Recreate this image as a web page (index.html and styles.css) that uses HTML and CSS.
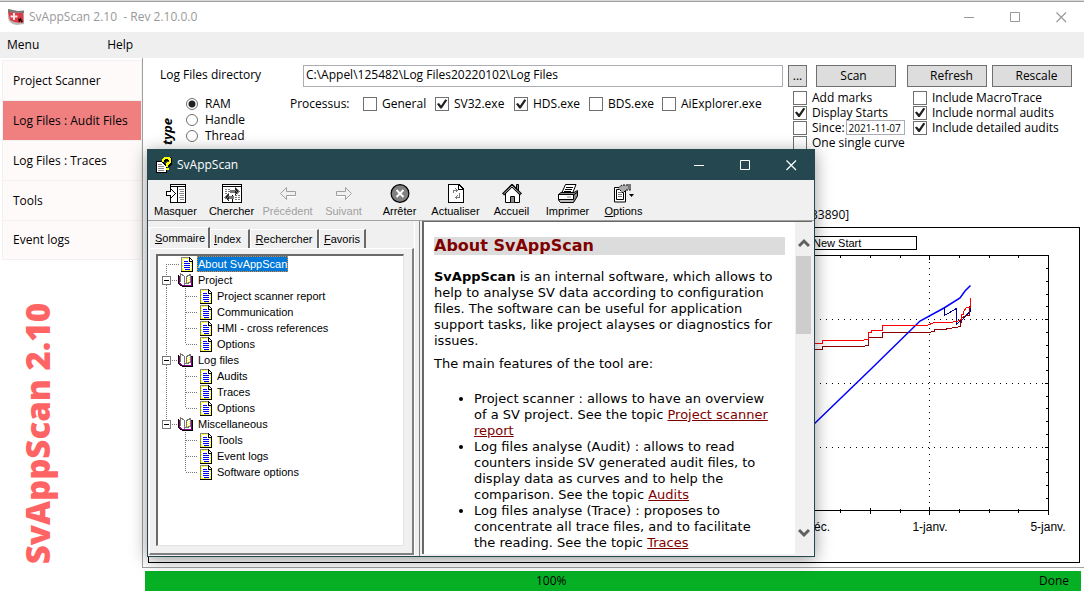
FILE: index.html
```html
<!DOCTYPE html>
<html lang="en">
<head>
<meta charset="utf-8">
<title>SvAppScan 2.10</title>
<link rel="stylesheet" href="styles.css">
</head>
<body>
<svg class="sprite" aria-hidden="true">
  <symbol id="doc" viewBox="0 0 13 16">
    <path d="M0 1H9L12 4V16H0Z" fill="#fff"/>
    <path d="M2 2.500h6M1 14.500h10" stroke="#ff0" stroke-dasharray="2 1" fill="none"/>
    <path d="M1.500 3v11M10.500 6v9" stroke="#ff0" stroke-dasharray="2 1" fill="none"/>
    <path d="M.5 16V1.500H8" stroke="#848484" fill="none"/>
    <path d="M8.500 1V5.500H11.500M9.500 2v1M10.500 3v1M11.500 4V15.500H0" stroke="#000" fill="none"/>
    <path d="M3 5.500h4M3 7.500h6M3 9.500h6M3 11.500h6M4 13.500h5" stroke="#00f" fill="none"/>
  </symbol>
  <symbol id="book" viewBox="0 0 16 16">
    <path d="M1 3v9l4 2h9V4h-2V1L8 4 4 1v2Z" fill="#fff"/>
    <path d="M9.500 4v7M11.500 3v7" stroke="#ff0" stroke-dasharray="1 1" fill="none"/>
    <path d="M.5 2.500V11.500L4.500 14.500H14.500V4.500H13" stroke="#000" fill="none"/>
    <path d="M1.500 3.500V11.500L5 13.500H13.500V5" stroke="#800080" fill="none"/>
    <path d="M2.500 10V1.500L6.500 4.500V12.500M7.500 12L8.500 11.500L12.500 10.500V2.500L8.500 4.500V11" stroke="#777" fill="none"/>
  </symbol>
  <symbol id="g-first" viewBox="0 0 23 16"><path d="M8 8.500H21M8.500 10V16" class="dots"/></symbol>
  <symbol id="g-open" viewBox="0 0 20 16"><path d="M8.500 0V4M8.500 13V16M14 8.500H19" class="dots"/><path d="M4.500 4.500h8v8h-8Z" fill="#fff" stroke="#777"/><path d="M6 8.500h5" stroke="#000"/></symbol>
  <symbol id="g-open-last" viewBox="0 0 20 16"><path d="M8.500 0V4M14 8.500H19" class="dots"/><path d="M4.500 4.500h8v8h-8Z" fill="#fff" stroke="#777"/><path d="M6 8.500h5" stroke="#000"/></symbol>
  <symbol id="g-mid" viewBox="0 0 42 16"><path d="M8.500 0V16M27.500 0V16M28 8.500H39" class="dots"/></symbol>
  <symbol id="g-last" viewBox="0 0 42 16"><path d="M8.500 0V16M27.500 0V8M28 8.500H39" class="dots"/></symbol>
  <symbol id="g-mid-end" viewBox="0 0 42 16"><path d="M27.500 0V16M28 8.500H39" class="dots"/></symbol>
  <symbol id="g-last-end" viewBox="0 0 42 16"><path d="M27.500 0V8M28 8.500H39" class="dots"/></symbol>
  <symbol id="w-min" viewBox="0 0 11 11"><path d="M0 5.500h10" stroke="currentColor"/></symbol>
  <symbol id="w-max" viewBox="0 0 11 11"><path d="M.5 .5h9v9h-9Z" fill="none" stroke="currentColor"/></symbol>
  <symbol id="w-close" viewBox="0 0 11 11"><path d="M.5 .5l9.500 9.500M10 .5l-9.500 9.500" stroke="currentColor" stroke-width="1.200"/></symbol>
</svg>

<div class="app">
  <header class="titlebar">
    <svg class="app-logo" viewBox="0 0 17 16" width="17" height="16">
      <path d="M0 0L10 2L16 1V15L9 16Q1 15 0 9Z" fill="#bdb6b6"/>
      <path d="M0 3L15 4L15.500 13Q8 15 2 11Z" fill="#dc3a45"/>
      <path d="M0 0L9 2L16 2V4L0 3Z" fill="#777"/>
      <path d="M6 4v7M2.500 7.500h7" stroke="#fbe4e4" stroke-width="2"/>
      <path d="M11 13l1.500-3 1.500 3M11 9.500v2M14 12v1.500" stroke="#200" stroke-width="1.300" fill="none"/>
    </svg>
    <h1 class="title">SvAppScan 2.10&nbsp; - Rev 2.10.0.0</h1>
    <div class="controls">
      <button aria-label="Minimize"><svg width="11" height="11"><use href="#w-min"/></svg></button>
      <button aria-label="Maximize"><svg width="11" height="11"><use href="#w-max"/></svg></button>
      <button aria-label="Close"><svg width="11" height="11"><use href="#w-close"/></svg></button>
    </div>
  </header>

  <nav class="menubar">
    <button>Menu</button>
    <button>Help</button>
  </nav>

  <div class="body">
    <aside class="sidebar">
      <nav class="side-nav">
        <button>Project Scanner</button>
        <button class="active">Log Files : Audit Files</button>
        <button>Log Files : Traces</button>
        <button>Tools</button>
        <button>Event logs</button>
      </nav>
      <div class="brand">SvAppScan 2.10</div>
    </aside>

    <main class="main">
      <section class="panel">
        <div class="dir-row">
          <label for="dir">Log Files directory</label>
          <input id="dir" class="dir" type="text" value="C:\Appel\125482\Log Files20220102\Log Files">
          <button class="btn browse">...</button>
          <button class="btn scan">Scan</button>
          <button class="btn refresh">Refresh</button>
          <button class="btn rescale">Rescale</button>
        </div>
        <div class="options-row">
          <div class="type-label">type</div>
          <div class="radios">
            <label><input type="radio" name="type" checked>RAM</label>
            <label><input type="radio" name="type">Handle</label>
            <label><input type="radio" name="type">Thread</label>
          </div>
          <div class="process">
            <span>Processus:</span>
            <label><input type="checkbox">General</label>
            <label><input type="checkbox" checked>SV32.exe</label>
            <label><input type="checkbox" checked>HDS.exe</label>
            <label><input type="checkbox">BDS.exe</label>
            <label><input type="checkbox">AiExplorer.exe</label>
          </div>
          <div class="checks">
            <label><input type="checkbox">Add marks</label>
            <label><input type="checkbox" checked>Display Starts</label>
            <div class="since"><label><input type="checkbox">Since:</label><input class="date" type="text" aria-label="Since date" value="2021-11-07"></div>
            <label><input type="checkbox">One single curve</label>
          </div>
          <div class="checks">
            <label><input type="checkbox">Include MacroTrace</label>
            <label><input type="checkbox" checked>Include normal audits</label>
            <label><input type="checkbox" checked>Include detailed audits</label>
          </div>
        </div>
        <div class="chart-title">33890]</div>
        <div class="chart">
          <svg viewBox="149 228 930 334" preserveAspectRatio="xMaxYMax meet" role="img" aria-label="Audit curves">
            <g class="crisp" fill="none" stroke="#000">
              <path d="M700 236.500H916.500V249.500H700"/>
              <path d="M700 255.500H1048.500V515M700 510.500H1048"/>
              <path d="M929.500 256V510M700 319.500H1048M700 383.500H1048M700 447.500H1048" stroke-dasharray="1 5"/>
              <path d="M840.500 255v3M870.500 255v3M900.500 255v3M929.500 255v5M959.500 255v3M989.500 255v3M1018.500 255v3"/>
              <path d="M840.500 509v4M870.500 508v6M900.500 509v4M929.500 507v8M959.500 509v4M989.500 509v4M1018.500 509v4"/>
              <path d="M1046 268.500h3M1046 281.500h3M1046 294.500h3M1046 306.500h3M1045 319.500h4M1046 332.500h3M1046 345.500h3M1046 357.500h3M1046 370.500h3M1045 383.500h4M1046 396.500h3M1046 408.500h3M1046 421.500h3M1046 434.500h3M1045 447.500h4M1046 459.500h3M1046 472.500h3M1046 485.500h3M1046 498.500h3"/>
            </g>
            <g fill="none">
              <path class="crisp" stroke="#8b0000" d="M813 349.500H822.500V346.500H862L868.500 345.500V337.500H882.500V332.500H927L934.500 331.500V329.500H944L949 328.500L960.500 326.500V322.500H961.500V319"/>
              <path stroke="#00f" stroke-width="1.500" d="M813 425L870 370L920 321L944 308L960 298L965 291L970.500 285.500"/>
              <path class="crisp" stroke="#00008b" d="M944.500 307V315.500L956.500 308.500V324L962 320L970.500 311V306"/>
              <path class="crisp" stroke="#8b0000" d="M961.500 322V318.500L965.500 315.500H969.500V306"/>
              <path class="crisp" stroke="#f00" d="M813 343.500H822.500V340.500H859L868.500 339.500V332.500H871.500V330.500H882.500V325.500H926.500L934.500 322.500H949L957 321.500L961.500 319.500V314.500H963.500V311.500L966.500 307.500H970.500V298"/>
            </g>
            <text class="legend" x="813" y="247">New Start</text>
            <text class="axis" x="814" y="531">éc.</text>
            <text class="axis" x="930" y="531" text-anchor="middle">1-janv.</text>
            <text class="axis" x="1048" y="531" text-anchor="middle">5-janv.</text>
          </svg>
        </div>
      </section>
      <div class="progress" role="progressbar" aria-valuenow="100"><span class="percent">100%</span><span>Done</span></div>
    </main>
  </div>

  <section class="dialog" role="dialog" aria-label="SvAppScan">
    <header class="dialog-title">
      <svg width="16" height="17" viewBox="0 0 16 17" class="crisp">
        <path d="M.5 4.500H6L10.500 9V15.500H.5Z" fill="#fff" stroke="#000"/>
        <path d="M2 7.500h4M2 9.500h6M2 11.500h6M2 13.500h6" stroke="#888"/>
        <path d="M8 5V3.500L10 1.500H13L15 3.500V6L12 8.500V10" fill="none" stroke="#000" stroke-width="4"/>
        <path d="M7 5V3L9 1H13L14 3V5L11 7.500V10M10 12h3" fill="none" stroke="#ff0" stroke-width="2.500"/>
      </svg>
      <h2>SvAppScan</h2>
      <div class="controls">
        <button aria-label="Minimize help"><svg width="11" height="11"><use href="#w-min"/></svg></button>
        <button aria-label="Maximize help"><svg width="11" height="11"><use href="#w-max"/></svg></button>
        <button aria-label="Close help"><svg width="11" height="11"><use href="#w-close"/></svg></button>
      </div>
    </header>

    <div class="toolbar">
      <button><svg class="crisp" width="20" height="19" viewBox="0 0 20 19">
        <path d="M4.500 .5H19.500V18H4.500Z" fill="#fff" stroke="#000"/><path d="M5 2.500H19M11.500 3V18" stroke="#000"/>
        <path d="M13 5.500h5M14 7.500h4M13 9.500h5M14 11.500h4M13 13.500h5M14 15.500h4" stroke="#888"/>
        <path d="M.5 7.500H4.500V4.500L9.500 9.500L4.500 14.500V11.500H.5Z" fill="#fff" stroke="#000"/></svg>Masquer</button>
      <button><svg class="crisp" width="20" height="19" viewBox="0 0 20 19">
        <path d="M.5 .5H19.500V18H.5Z" fill="#fff" stroke="#000"/><path d="M1 2.500H19M10.500 11V18" stroke="#000"/>
        <path d="M3 5.500h5M3 7.500h5M3 9.500h4M13 11.500h5M13 13.500h5M13 15.500h5" stroke="#777" stroke-dasharray="2 1"/>
        <path d="M8 6h5V3l5 4.500-5 4V9H8Z" fill="#777"/><path d="M12 12H7V9l-5 4.500 5 4V15h5Z" fill="#777"/>
        <path d="M13.500 4v7M14.500 5v5M15.500 6v3M6.500 10v7M5.500 11v5M4.500 12v3" stroke="#222" stroke-dasharray="2 1"/></svg>Chercher</button>
      <button disabled><svg width="20" height="19" viewBox="0 0 20 19"><path d="M3 10.500L9 4.500V8.500H18V13.500H9V17Z" fill="#fff"/><path d="M2.500 9.500L8.500 3.500V7.500H17.500V11.500H8.500V15.500Z" fill="#f0f0f0" stroke="#a0a0a0"/></svg>Précédent</button>
      <button disabled><svg width="20" height="19" viewBox="0 0 20 19"><path d="M18 10.500L12 4.500V8.500H3V13.500H12V17Z" fill="#fff"/><path d="M17.500 9.500L11.500 3.500V7.500H2.500V11.500H11.500V15.500Z" fill="#f0f0f0" stroke="#a0a0a0"/></svg>Suivant</button>
      <button><svg width="20" height="19" viewBox="0 0 20 19"><circle cx="10" cy="9.500" r="8.900" fill="#808080" stroke="#000" stroke-width="1.200"/><path d="M6.500 6l7 7M13.500 6l-7 7" stroke="#fff" stroke-width="2"/></svg>Arrêter</button>
      <button><svg class="crisp" width="20" height="19" viewBox="0 0 20 19">
        <path d="M2.500 .5H13L17.500 5V18H2.500Z" fill="#fff" stroke="#000"/><path d="M12.500 1V5.500H17" fill="none" stroke="#000"/>
        <path d="M7.500 9V6.500H11M9.500 4.500l2 2-2 2M13.500 9V13.500H10M11.500 11.500l-2 2 2 2" fill="none" stroke="#777"/></svg>Actualiser</button>
      <button><svg width="20" height="19" viewBox="0 0 20 19">
        <path d="M14.500 5V.5H16.500V7" fill="#888" stroke="#000"/><path d="M3.500 9V18.500H17.500V9L10 2Z" fill="#fff" stroke="#000"/>
        <path d="M1 10.500L10 1.500L19 10.500" fill="none" stroke="#000" stroke-width="3"/><path d="M1.500 10L10 2L18.500 10" fill="none" stroke="#bbb"/>
        <path d="M8.500 18.500V12.500H12.500V18.500" fill="#888" stroke="#000"/></svg>Accueil</button>
      <button><svg width="22" height="19" viewBox="0 0 22 19">
        <path d="M4.500 9.500L8.500 .5H19L15.500 9.500Z" fill="#fff" stroke="#000"/><path d="M9 3.500h7M8 5.500h7M7 7.500h7" stroke="#000"/>
        <path d="M1.500 10.500L4 8.500H17L20.500 6.500V12L16.500 18.500H3.500L1.500 16Z" fill="#888" stroke="#000"/>
        <path d="M1.500 10.500H16.500V15.500H1.500Z" fill="#fff" stroke="#000"/><path d="M10 13h4" stroke="#888"/><path d="M3 17h13" stroke="#eee"/><path d="M16.500 11l4-3" stroke="#000"/></svg>Imprimer</button>
      <button><svg width="22" height="19" viewBox="0 0 22 19">
        <path d="M1.500 3.500H12.500V18H1.500Z" fill="#fff" stroke="#000"/><path d="M3.500 5.500H10.500V15.500H3.500Z" fill="none" stroke="#000"/>
        <path d="M5 8.500h4M5 10.500h4M5 12.500h4" stroke="#777"/><path d="M5 4L9 1H17.500V6H13L10 9L7 6" fill="#aaa" stroke="#000" stroke-dasharray="2 1"/><path d="M15 0h3v5h-3Z" fill="#777"/>
        <path d="M16 10h5l-2.500 3Z" fill="#000"/></svg><span><u>O</u>ptions</span></button>
    </div>

    <div class="help">
      <div class="nav-pane">
        <div class="tabs">
          <button class="tab current"><u>S</u>ommaire</button>
          <button class="tab index"><u>I</u>ndex</button>
          <button class="tab search"><u>R</u>echercher</button>
          <button class="tab fav"><u>F</u>avoris</button>
        </div>
        <div class="tab-page">
          <ul class="tree">
            <li><svg class="guide" width="23"><use href="#g-first"/></svg><svg class="doc"><use href="#doc"/></svg><span class="selected">About SvAppScan</span></li>
            <li><svg class="guide" width="20"><use href="#g-open"/></svg><svg class="book"><use href="#book"/></svg><span>Project</span></li>
            <li><svg class="guide" width="42"><use href="#g-mid"/></svg><svg class="doc"><use href="#doc"/></svg><span>Project scanner report</span></li>
            <li><svg class="guide" width="42"><use href="#g-mid"/></svg><svg class="doc"><use href="#doc"/></svg><span>Communication</span></li>
            <li><svg class="guide" width="42"><use href="#g-mid"/></svg><svg class="doc"><use href="#doc"/></svg><span>HMI - cross references</span></li>
            <li><svg class="guide" width="42"><use href="#g-last"/></svg><svg class="doc"><use href="#doc"/></svg><span>Options</span></li>
            <li><svg class="guide" width="20"><use href="#g-open"/></svg><svg class="book"><use href="#book"/></svg><span>Log files</span></li>
            <li><svg class="guide" width="42"><use href="#g-mid"/></svg><svg class="doc"><use href="#doc"/></svg><span>Audits</span></li>
            <li><svg class="guide" width="42"><use href="#g-mid"/></svg><svg class="doc"><use href="#doc"/></svg><span>Traces</span></li>
            <li><svg class="guide" width="42"><use href="#g-last"/></svg><svg class="doc"><use href="#doc"/></svg><span>Options</span></li>
            <li><svg class="guide" width="20"><use href="#g-open-last"/></svg><svg class="book"><use href="#book"/></svg><span>Miscellaneous</span></li>
            <li><svg class="guide" width="42"><use href="#g-mid-end"/></svg><svg class="doc"><use href="#doc"/></svg><span>Tools</span></li>
            <li><svg class="guide" width="42"><use href="#g-mid-end"/></svg><svg class="doc"><use href="#doc"/></svg><span>Event logs</span></li>
            <li><svg class="guide" width="42"><use href="#g-last-end"/></svg><svg class="doc"><use href="#doc"/></svg><span>Software options</span></li>
          </ul>
        </div>
      </div>
      <div class="splitter"></div>
      <div class="topic">
        <article class="article">
          <h3>About SvAppScan</h3>
          <p><b>SvAppScan</b> is an internal software, which allows to help to analyse SV data according to configuration files. The software can be useful for application support tasks, like project alayses or diagnostics for issues.</p>
          <p>The main features of the tool are:</p>
          <ul>
            <li>Project scanner : allows to have an overview of a SV project. See the topic <a href="#">Project scanner report</a></li>
            <li>Log files analyse (Audit) : allows to read counters inside SV generated audit files, to display data as curves and to help the comparison. See the topic <a href="#">Audits</a></li>
            <li>Log files analyse (Trace) : proposes to concentrate all trace files, and to facilitate the reading. See the topic <a href="#">Traces</a></li>
          </ul>
        </article>
        <div class="scrollbar">
          <svg width="12" height="10" viewBox="0 0 12 10"><path d="M1 8L6 3L11 8" fill="none" stroke="#606060" stroke-width="3"/></svg>
          <div class="thumb"></div>
          <svg width="12" height="10" viewBox="0 0 12 10"><path d="M1 2L6 7L11 2" fill="none" stroke="#606060" stroke-width="3"/></svg>
        </div>
      </div>
    </div>
  </section>
</div>
</body>
</html>
```

FILE: styles.css
```css
* { box-sizing: border-box; }
body {
  margin: 0;
  background: #fff;
  color: #000;
  font: 12px/16px "Open Sans", "Noto Sans", sans-serif;
}
button, input { font: inherit; color: inherit; }
button { border: 0; padding: 0; background: none; }
h1, h2 { margin: 0; font-size: 12px; font-weight: 400; }
.sprite { position: absolute; width: 0; height: 0; }
.crisp, .guide, .doc, .book { shape-rendering: crispEdges; }
.dots { fill: none; stroke: #777; stroke-dasharray: 1 1; }

.app {
  position: relative;
  display: flex;
  flex-direction: column;
  min-height: 100vh;
  border-top: 1px solid #d9d9d9;
}

.titlebar {
  display: flex;
  align-items: center;
  height: 31px;
  padding-left: 8px;
  border-top: 1px solid #a0a0a0;
  color: #999;
}
.title { margin-left: 4px; flex: 1; }
.controls { display: flex; }
.controls button {
  display: flex;
  align-items: center;
  justify-content: center;
  width: 46px;
  height: 28px;
}

.menubar {
  display: flex;
  gap: 68px;
  height: 26px;
  padding-left: 7px;
  background: #efefef;
}

.body { display: flex; flex: 1; }
.sidebar {
  display: flex;
  flex-direction: column;
  justify-content: space-between;
  width: 142px;
  padding: 2px 0 29px 2px;
}
.side-nav { display: flex; flex-direction: column; }
.side-nav button {
  height: 40px;
  padding-left: 10px;
  border: 1px solid #f1f1f3;
  border-width: 1px 1px 0;
  background: #fffafa;
  text-align: left;
}
.side-nav button:last-child { border-bottom-width: 1px; }
.side-nav .active { background: #f08080; border-color: #f1f1f3; }
.brand {
  align-self: flex-start;
  margin-left: 14px;
  color: #ff6464;
  font-size: 33px;
  line-height: 44px;
  font-weight: 800;
  writing-mode: vertical-rl;
  transform: rotate(180deg);
}

.main { display: flex; flex: 1; flex-direction: column; min-width: 0; padding-bottom: 2px; }
.panel {
  display: flex;
  flex: 1;
  flex-direction: column;
  padding: 7px 4px 4px 5px;
  border-left: 1px solid #a0a0a0;
  border-bottom: 1px solid #a0a0a0;
}
.dir-row { display: flex; align-items: center; padding: 0 8px 0 12px; }
.dir-row label { width: 143px; padding-bottom: 2px; }
.dir {
  flex: 1;
  min-width: 0;
  height: 22px;
  padding: 0 2px 4px;
  border: 1px solid #abadb3;
}
.btn { width: 80px; height: 22px; border: 1px solid #707070; background: #ddd; }
.browse { width: 19px; margin: 0 9px 0 5px; }
.scan { padding-right: 5px; margin-right: 11px; }
.refresh { padding-left: 9px; margin-right: 5px; }
.rescale { padding-left: 9px; }

.options-row { display: flex; align-items: flex-start; height: 64px; padding: 3px 0 0 12px; }
.options-row label { display: flex; align-items: center; white-space: nowrap; }
.type-label {
  width: 14px;
  margin-top: 28px;
  font-size: 13px;
  line-height: 14px;
  font-weight: 700;
  font-style: italic;
  writing-mode: vertical-rl;
  transform: rotate(180deg);
}
.radios { width: 116px; padding: 6px 0 0 12px; }
.radios label { gap: 7px; }
input[type="radio"], input[type="checkbox"] { appearance: none; margin: 0; background: #fff; border: 1px solid #707070; flex: none; }
input[type="radio"] { width: 12px; height: 12px; border-radius: 50%; }
input[type="radio"]:checked { background: radial-gradient(circle, #212121 3px, #fff 4px); }
input[type="checkbox"] { width: 14px; height: 14px; }
input[type="checkbox"]:checked::after {
  content: "";
  display: block;
  width: 12px;
  height: 12px;
  background: #212121;
  clip-path: polygon(8% 50%, 24% 42%, 42% 62%, 78% 10%, 94% 18%, 48% 88%, 36% 88%);
}
.process {
  display: grid;
  grid-template-columns: 73px 72px 79px 75px 73px auto;
  flex: 1;
  padding-top: 6px;
}
.process label { gap: 5px; }
.checks { display: grid; grid-auto-rows: 15px; width: 120px; }
.checks label { gap: 5px; }
.checks:last-child { width: 167px; }
.since { display: flex; gap: 1px; }
.date {
  width: 59px;
  height: 15px;
  padding: 0 2px;
  border: 1px solid #abadb3;
  font: 10px/13px "Open Sans", sans-serif;
}

.chart-title { margin-top: 56px; padding-left: 663px; }
.chart { flex: 1; margin-top: 4px; border: 1px solid #000; }
.chart svg { display: block; width: 100%; height: 334px; }
.legend { font: 11px "Liberation Sans", sans-serif; }
.axis { font: 12px "Liberation Sans", sans-serif; }

.progress {
  display: flex;
  justify-content: space-between;
  margin: 3px 3px 0;
  padding: 2px 12px 2px 391px;
  background: #06b025;
}

.dialog {
  position: absolute;
  inset: 148px 269px 36px 147px;
  display: flex;
  flex-direction: column;
  border: 1px solid #254850;
  background: #f0f0f0;
  box-shadow: 0 3px 16px rgba(0, 0, 0, .4);
  font: 11px/14px "Liberation Sans", Arial, sans-serif;
}
.dialog-title {
  display: flex;
  align-items: center;
  height: 30px;
  padding-left: 8px;
  background: #254850;
  color: #fff;
  font: 12px/16px "Open Sans", sans-serif;
}
.dialog-title h2 { flex: 1; margin-left: 5px; }
.toolbar { display: flex; height: 41px; border-bottom: 1px solid #a0a0a0; }
.toolbar button { display: flex; flex-direction: column; align-items: center; width: 56px; padding: 4px 1px 0 0; gap: 1px; }
.toolbar button:disabled { color: #a0a0a0; }

.help { display: flex; flex: 1; min-height: 0; }
.nav-pane { display: flex; flex-direction: column; width: 266px; padding: 6px 0 1px 1px; }
.tabs { display: flex; align-items: flex-end; height: 21px; }
.tab {
  height: 19px;
  border: solid;
  border-width: 1px 2px 0 1px;
  border-color: #fff #696969 #fff #fff;
  text-align: center;
}
.tab.current { width: 61px; height: 21px; padding: 0 0 1px 2px; }
.tab.index { width: 40px; padding-right: 4px; }
.tab.search { width: 69px; }
.tab.fav { width: 47px; }
.tab-page {
  flex: 1;
  min-height: 0;
  padding: 5px 8px 7px 6px;
  border: solid;
  border-width: 1px 2px 2px 1px;
  border-color: #fff #808080 #808080 #fff;
}
.tree {
  height: 100%;
  margin: 0;
  padding: 0;
  border: solid;
  border-width: 2px 1px 1px 2px;
  border-color: #696969 #e3e3e3 #e3e3e3 #696969;
  background: #fff;
  list-style: none;
  overflow: hidden;
}
.tree li { display: flex; height: 16px; }
.tree span { padding: 0 1px; margin-left: 3px; line-height: 16px; white-space: nowrap; }
.tree .selected { background: #0078d7; color: #fff; outline: 1px dotted #f08020; outline-offset: -1px; }
.guide { height: 16px; }
.doc { width: 13px; height: 16px; }
.book { width: 16px; height: 16px; }

.splitter { width: 8px; border-left: 1px solid #fff; box-shadow: inset 4px 0 #f0f0f0, inset 5px 0 #808080; }
.topic {
  display: flex;
  flex: 1;
  min-width: 0;
  margin: 0 2px 2px 0;
  border: solid #696969;
  border-width: 1px 0 0 2px;
  background: #fff;
}
.article {
  flex: 1;
  min-width: 0;
  padding: 15px 10px 0;
  overflow: hidden;
  font: 13px/16px "DejaVu Sans", Verdana, sans-serif;
}
.article h3 { margin: 0 0 14px; background: #dcdcdc; color: #800000; font-size: 16px; line-height: 18px; }
.article p { margin: 0 0 7px; }
.article ul { margin: 19px 0 0; padding: 0 14px 0 40px; }
.article a { color: #800000; }
.scrollbar {
  display: flex;
  flex-direction: column;
  align-items: center;
  width: 17px;
  padding: 16px 0;
  background: #f0f0f0;
}
.thumb { width: 15px; height: 78px; margin: 8px 0 auto; background: #cdcdcd; }
```
